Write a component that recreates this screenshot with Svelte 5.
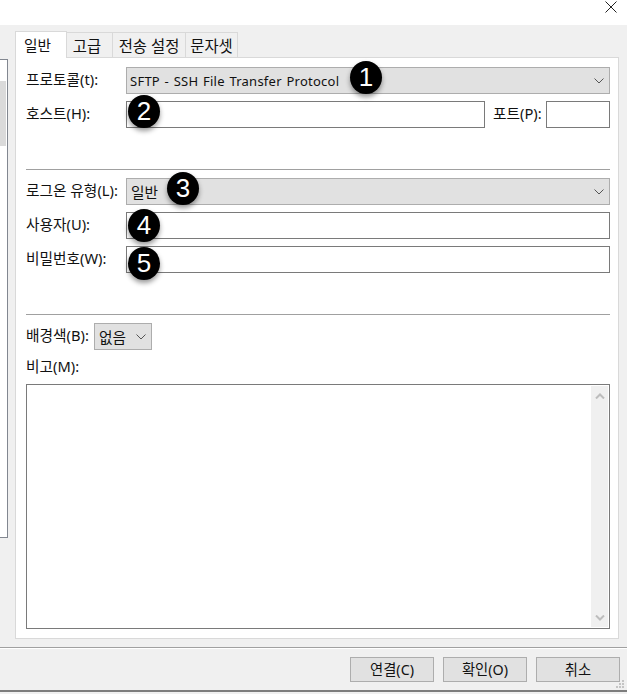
<script>
  const tabs = [
    { label: '일반', active: true },
    { label: '고급' },
    { label: '전송 설정' },
    { label: '문자셋' }
  ];
  const buttons = ['연결(C)', '확인(O)', '취소'];
</script>

<div class="window">
  <div class="titlebar">
    <svg class="close" width="12" height="12" viewBox="0 0 12 12" aria-hidden="true">
      <path d="M.5.5l11 11M11.5.5l-11 11" fill="none" stroke="#222" stroke-width="1" />
    </svg>
  </div>

  <div class="body">
    <div class="main">
      <div class="side">
        <div class="list"><div class="thumb"></div></div>
      </div>

      <div class="tabbox">
        <div class="tabs">
          {#each tabs as t}
            <div class="tab" class:active={t.active}>{t.label}</div>
          {/each}
        </div>

        <div class="panel">
          <div class="row first">
            <span class="label w100">프로토콜(t):</span>
            <div class="combo grow">
              <span>SFTP - SSH File Transfer Protocol</span>
              <svg class="chev" width="10" height="6" viewBox="0 0 10 6"><path d="M.5.5L5 5 9.5.5" fill="none" stroke="#555" /></svg>
              <span class="badge b1">1</span>
            </div>
          </div>

          <div class="row">
            <span class="label w100">호스트(H):</span>
            <div class="input host"><span class="badge b2">2</span></div>
            <span class="label port">포트(P):</span>
            <div class="input portbox"></div>
          </div>

          <hr class="rule r1" />

          <div class="row">
            <span class="label w100">로그온 유형(L):</span>
            <div class="combo grow">
              <span class="kr">일반</span>
              <svg class="chev" width="10" height="6" viewBox="0 0 10 6"><path d="M.5.5L5 5 9.5.5" fill="none" stroke="#555" /></svg>
              <span class="badge b3">3</span>
            </div>
          </div>

          <div class="row">
            <span class="label w100">사용자(U):</span>
            <div class="input grow"><span class="badge b4">4</span></div>
          </div>

          <div class="row">
            <span class="label w100">비밀번호(W):</span>
            <div class="input grow"><span class="badge b5">5</span></div>
          </div>

          <hr class="rule r2" />

          <div class="row">
            <span class="label w68">배경색(B):</span>
            <div class="combo small">
              <span class="kr">없음</span>
              <svg class="chev" width="10" height="6" viewBox="0 0 10 6"><path d="M.5.5L5 5 9.5.5" fill="none" stroke="#555" /></svg>
            </div>
          </div>

          <div class="memo-label">비고(M):</div>

          <div class="memo">
            <div class="scroll">
              <svg width="10" height="6" viewBox="0 0 10 6"><path d="M1 5.5L5 1.5 9 5.5" fill="none" stroke="#bdbdbd" stroke-width="2" /></svg>
              <svg width="10" height="6" viewBox="0 0 10 6"><path d="M1 .5L5 4.5 9 .5" fill="none" stroke="#bdbdbd" stroke-width="2" /></svg>
            </div>
          </div>
        </div>
      </div>
    </div>

    <div class="footer">
      {#each buttons as b}
        <div class="btn">{b}</div>
      {/each}
      <svg class="grip" width="8" height="8" viewBox="0 0 8 8" aria-hidden="true">
        <path d="M6 0h2v2H6zM3 3h2v2H3zM6 3h2v2H6zM0 6h2v2H0zM3 6h2v2H3zM6 6h2v2H6z" fill="#c4c4c4" />
      </svg>
    </div>
  </div>
</div>

<style>
  :global(body) { margin: 0; background: #fff; }

  .window {
    width: 627px;
    height: 694px;
    overflow: hidden;
    display: flex;
    flex-direction: column;
    background: #f0f0f0;
    font-family: "Noto Sans", "Noto Sans CJK KR", sans-serif;
    font-size: 14.7px;
    color: #111;
    box-sizing: border-box;
  }

  .titlebar {
    height: 25px;
    flex: none;
    background: #fff;
    display: flex;
    justify-content: flex-end;
    align-items: flex-start;
    padding: 1px 10px 0 0;
    box-sizing: border-box;
  }
  .close { display: block; }

  .body {
    height: 665px;
    flex: none;
    display: flex;
    flex-direction: column;
    background: #f0f0f0;
    border-bottom: 2px solid #7d7d7d;
    box-sizing: content-box;
  }

  .main {
    height: 622px;
    flex: none;
    display: flex;
  }

  .side { width: 15px; flex: none; padding-top: 34px; box-sizing: border-box; }
  .list {
    width: 8px;
    height: 479px;
    background: #fff;
    border: 1px solid #828790;
    border-left: 0;
    box-sizing: border-box;
    padding-top: 21px;
  }
  .thumb { width: 6px; height: 65px; background: #dadada; }

  .tabbox { width: 604px; flex: none; padding-top: 7px; box-sizing: border-box; display: flex; flex-direction: column; }

  .tabs { display: flex; height: 26px; align-items: flex-end; flex: none; position: relative; z-index: 1; font-size: 15.4px; }
  .tab {
    height: 25px;
    margin-bottom: 1px;
    background: #f0f0f0;
    border: 1px solid #d9d9d9;
    border-bottom: 0;
    margin-left: -1px;
    padding: 0 2px;
    display: flex;
    align-items: center;
    justify-content: center;
    box-sizing: border-box;
    white-space: nowrap;
  }
  .tab:nth-child(2) { width: 47px; padding-right: 7px; }
  .tab:nth-child(3) { width: 74px; }
  .tab:nth-child(4) { width: 53px; }
  .tab.active {
    width: 52px;
    height: 27px;
    margin-left: 0;
    margin-bottom: 0;
    background: #fff;
    position: relative;
    padding: 0 9px 2px 2px;
    font-size: 14.7px;
  }

  .panel {
    width: 604px;
    height: 582px;
    background: #fff;
    border: 1px solid #d9d9d9;
    box-sizing: border-box;
    padding: 9px 8px 0 10px;
    margin-top: -1px;
    display: flex;
    flex-direction: column;
  }

  .row { display: flex; align-items: center; height: 27px; margin-top: 7px; flex: none; }
  .row.first { margin-top: 0; }

  .label { flex: none; white-space: nowrap; padding-bottom: 5px; }
  .w100 { width: 100px; }
  .w68 { width: 68px; }
  .port { margin-left: 8px; width: 53px; }

  .grow { flex: 1; }

  .combo {
    position: relative;
    height: 27px;
    background: #e1e1e1;
    border: 1px solid #adadad;
    box-sizing: border-box;
    display: flex;
    align-items: center;
    justify-content: space-between;
    padding: 0 5px 0 3px;
    white-space: nowrap;
    font-size: 13px;
    word-spacing: 1px;
    letter-spacing: .25px;
  }
  .combo.small { width: 58px; }
  .kr { padding-left: 1px; letter-spacing: 0; font-size: 14.7px; }
  .chev { flex: none; }

  .input {
    position: relative;
    height: 27px;
    background: #fff;
    border: 1px solid #7a7a7a;
    box-sizing: border-box;
  }
  .host { width: 359px; }
  .portbox { width: 64px; }

  .rule { border: 0; height: 1px; background: #a0a0a0; margin: 0; flex: none; }
  .r1 { margin-top: 41px; margin-bottom: 1px; }
  .r2 { margin-top: 41px; margin-bottom: 1px; }

  .memo-label { margin-top: 7px; height: 18px; line-height: 18px; flex: none; margin-bottom: 1px; }

  .memo {
    width: 584px;
    height: 245px;
    margin-top: 8px;
    flex: none;
    background: #fff;
    border: 1px solid #7a7a7a;
    box-sizing: border-box;
    display: flex;
    justify-content: flex-end;
    padding: 1px;
  }
  .scroll {
    width: 17px;
    background: #f0f0f0;
    display: flex;
    flex-direction: column;
    align-items: center;
    justify-content: space-between;
    padding: 7px 0 6px;
    box-sizing: border-box;
  }
  .scroll svg { display: block; }

  .footer {
    position: relative;
    flex: none;
    height: 43px;
    border-top: 1px solid #a0a0a0;
    box-shadow: inset 0 1px 0 #fff;
    display: flex;
    justify-content: flex-end;
    gap: 9px;
    padding: 9px 7px 0 0;
    box-sizing: border-box;
  }
  .btn {
    width: 84px;
    height: 25px;
    background: #e1e1e1;
    border: 1px solid #adadad;
    box-sizing: border-box;
    display: flex;
    align-items: center;
    justify-content: center;
    font-size: 14.3px;
    padding-bottom: 2px;
  }
  .grip { position: absolute; right: 3px; bottom: 2px; }

  .badge {
    position: absolute;
    width: 32px;
    height: 33px;
    border-radius: 50%;
    background: #000;
    color: #fff;
    font-family: "Liberation Sans", sans-serif;
    font-size: 26px;
    letter-spacing: 0;
    word-spacing: 0;
    display: flex;
    align-items: center;
    justify-content: center;
    box-shadow: 0 3px 5px rgba(0, 0, 0, .4);
    z-index: 2;
  }
  .b1 { left: 223px; top: -7px; }
  .b2 { left: 1px; top: -7px; }
  .b3 { left: 40px; top: -7px; }
  .b4 { left: 1px; top: -4px; }
  .b5 { left: 1px; top: 0; }
</style>
